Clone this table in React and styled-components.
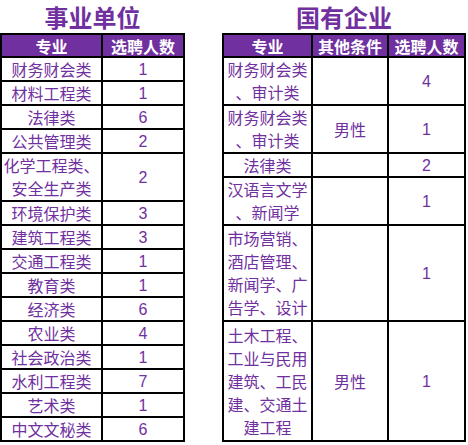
import React from "react";
import styled, { createGlobalStyle } from "styled-components";

const PURPLE = "#7030A0";

const Global = createGlobalStyle`
  html, body { margin: 0; padding: 0; background: #fff; }
  body { font-family: "Noto Sans CJK SC", sans-serif; }
`;

const Page = styled.div`
  display: flex;
  align-items: flex-start;
  gap: 37px;
  width: 468px;
  height: 445px;
  overflow: hidden;
`;

const Section = styled.section`
  display: flex;
  flex-direction: column;
  width: ${(p) => p.$width}px;
`;

const Title = styled.h1`
  margin: 0;
  height: 33px;
  line-height: 33px;
  text-align: center;
  font-size: 24px;
  font-weight: 700;
  color: ${PURPLE};
  font-family: "Noto Sans CJK SC", sans-serif;
`;

const Grid = styled.div`
  display: grid;
  grid-template-columns: ${(p) => p.$cols};
  grid-template-rows: ${(p) => p.$rows};
  border-top: 2px solid #000;
  border-left: 2px solid #000;
`;

const Cell = styled.div`
  box-sizing: border-box;
  min-width: 0;
  border-right: 2px solid #000;
  border-bottom: 2px solid #000;
  display: flex;
  flex-direction: column;
  align-items: center;
  justify-content: center;
  text-align: center;
  white-space: nowrap;
  line-height: 23px;
  font-size: 16px;
  color: ${PURPLE};
  font-family: ${(p) =>
    p.$num
      ? `"Liberation Sans", "Noto Sans CJK SC", sans-serif`
      : `"Noto Sans CJK SC", sans-serif`};
`;

const HeadCell = styled(Cell)`
  background: ${PURPLE};
  color: #fff;
  font-weight: 700;
  line-height: 20px;
`;

const Line = styled.span`
  display: block;
`;

const left = [
  ["财务财会类", "1"],
  ["材料工程类", "1"],
  ["法律类", "6"],
  ["公共管理类", "2"],
  [["化学工程类、", "安全生产类"], "2"],
  ["环境保护类", "3"],
  ["建筑工程类", "3"],
  ["交通工程类", "1"],
  ["教育类", "1"],
  ["经济类", "6"],
  ["农业类", "4"],
  ["社会政治类", "1"],
  ["水利工程类", "7"],
  ["艺术类", "1"],
  ["中文文秘类", "6"],
];

const right = [
  [["财务财会类", "、审计类"], "", "4"],
  [["财务财会类", "、审计类"], "男性", "1"],
  ["法律类", "", "2"],
  [["汉语言文学", "、新闻学"], "", "1"],
  [["市场营销、", "酒店管理、", "新闻学、广", "告学、设计"], "", "1"],
  [["土木工程、", "工业与民用", "建筑、工民", "建、交通土", "建工程"], "男性", "1"],
];

const Text = ({ v }) =>
  Array.isArray(v) ? v.map((l, i) => <Line key={i}>{l}</Line>) : v;

const rowH = (lines) => lines.map((n) => `${n * 24}px`).join(" ");
const linesOf = (m) => (Array.isArray(m) ? m.length : 1);

export default function App() {
  const leftRows = "23px " + rowH(left.map(([m]) => linesOf(m)));
  const rightRows = "23px " + rowH(right.map(([m]) => linesOf(m)));
  return (
    <>
      <Global />
      <Page>
        <Section $width={185}>
          <Title>事业单位</Title>
          <Grid $cols="101px 82px" $rows={leftRows}>
            <HeadCell>专业</HeadCell>
            <HeadCell>选聘人数</HeadCell>
            {left.map(([m, n], i) => (
              <React.Fragment key={i}>
                <Cell>
                  <Text v={m} />
                </Cell>
                <Cell $num>{n}</Cell>
              </React.Fragment>
            ))}
          </Grid>
        </Section>
        <Section $width={244}>
          <Title>国有企业</Title>
          <Grid $cols="89px 76px 77px" $rows={rightRows}>
            <HeadCell>专业</HeadCell>
            <HeadCell>其他条件</HeadCell>
            <HeadCell>选聘人数</HeadCell>
            {right.map(([m, c, n], i) => (
              <React.Fragment key={i}>
                <Cell>
                  <Text v={m} />
                </Cell>
                <Cell>{c}</Cell>
                <Cell $num>{n}</Cell>
              </React.Fragment>
            ))}
          </Grid>
        </Section>
      </Page>
    </>
  );
}
